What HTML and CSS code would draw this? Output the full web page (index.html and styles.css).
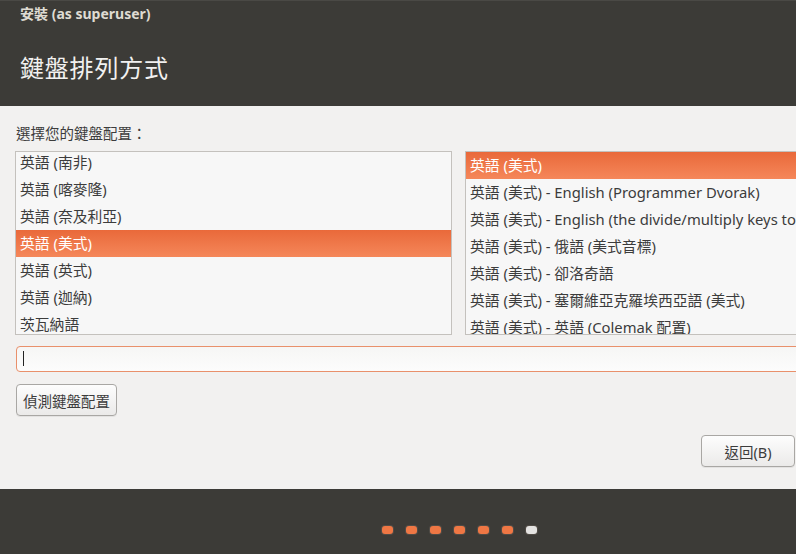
FILE: index.html
```html
<!DOCTYPE html>
<html lang="zh-Hant">
<head>
<meta charset="utf-8">
<link rel="stylesheet" href="styles.css">
</head>
<body>
<div class="window">
  <header class="header">
    <div class="titlebar">安裝 (as superuser)</div>
    <h1 class="page-title">鍵盤排列方式</h1>
  </header>
  <main class="content">
    <div class="label">選擇您的鍵盤配置：</div>
    <div class="lists">
      <div class="list list-left">
        <div class="rows rows-scrolled">
          <div class="row">英語 (南非)</div>
          <div class="row">英語 (喀麥隆)</div>
          <div class="row">英語 (奈及利亞)</div>
          <div class="row selected">英語 (美式)</div>
          <div class="row">英語 (英式)</div>
          <div class="row">英語 (迦納)</div>
          <div class="row">茨瓦納語</div>
        </div>
      </div>
      <div class="list list-right">
        <div class="rows">
          <div class="row selected">英語 (美式)</div>
          <div class="row">英語 (美式) - English (Programmer Dvorak)</div>
          <div class="row">英語 (美式) - English (the divide/multiply keys toggle the layout)</div>
          <div class="row">英語 (美式) - 俄語 (美式音標)</div>
          <div class="row">英語 (美式) - 卻洛奇語</div>
          <div class="row">英語 (美式) - 塞爾維亞克羅埃西亞語 (美式)</div>
          <div class="row">英語 (美式) - 英語 (Colemak 配置)</div>
        </div>
      </div>
    </div>
    <div class="input"><span class="caret"></span></div>
    <div class="actions">
      <button class="btn">偵測鍵盤配置</button>
    </div>
    <div class="nav">
      <button class="btn btn-back">返回(B)</button>
    </div>
  </main>
  <footer class="footer">
    <span class="dot"></span>
    <span class="dot"></span>
    <span class="dot"></span>
    <span class="dot"></span>
    <span class="dot"></span>
    <span class="dot"></span>
    <span class="dot dot-current"></span>
  </footer>
</div>
</body>
</html>
```
FILE: styles.css
```css
* { box-sizing: border-box; }
html, body {
  margin: 0;
  padding: 0;
  width: 796px;
  height: 554px;
  overflow: hidden;
}
body {
  font-family: "Noto Sans", "Noto Sans CJK TC", sans-serif;
  font-size: 14.5px;
  color: #3c3c3c;
  background: #f2f1f0;
}
.window {
  display: flex;
  flex-direction: column;
  height: 554px;
}
.header {
  background: #3c3b37;
  height: 106px;
  padding: 0 0 0 20px;
  border-top: 1px solid #4a4945;
}
.titlebar {
  height: 27px;
  line-height: 26px;
  font-size: 14px;
  font-weight: bold;
  color: #dfdbd2;
}
.page-title {
  margin: 0;
  padding-top: 24px;
  font-size: 24px;
  font-weight: normal;
  line-height: 32px;
  color: #f2f1f0;
  letter-spacing: 0.8px;
}
.content {
  flex: 1;
  overflow: hidden;
  padding: 17px 1px 0 15px;
  display: flex;
  flex-direction: column;
}
.label {
  line-height: 20px;
  padding-left: 1px;
  margin-bottom: 8px;
}
.lists {
  display: flex;
  gap: 13px;
  height: 184px;
}
.list {
  flex: none;
  background: #f7f7f7;
  border: 1px solid #c4c1bd;
  overflow: hidden;
  height: 184px;
}
.list-left { width: 437px; }
.list-right { width: 360px; border-right: none; }
.rows-scrolled { margin-top: -3px; }
.row {
  height: 27px;
  line-height: 27px;
  padding-left: 4px;
  white-space: nowrap;
  color: #3c3c3c;
  font-size: 14.8px;
}
.row.selected {
  background: linear-gradient(#e9693a, #f5875a);
  color: #ffffff;
}
.input {
  margin-top: 11px;
  margin-left: 1px;
  width: 800px;
  height: 26px;
  border: 1px solid #e9906b;
  border-radius: 4px;
  background: linear-gradient(#f6f6f5, #fcfcfc);
  position: relative;
}
.caret {
  position: absolute;
  left: 6px;
  top: 4px;
  width: 1px;
  height: 15px;
  background: #222;
}
.actions {
  margin-top: 12px;
  padding-left: 1px;
  display: flex;
}
.btn {
  font-family: "Noto Sans", "Noto Sans CJK TC", sans-serif;
  font-size: 14.5px;
  color: #3c3c3c;
  height: 32px;
  padding: 0 6px;
  border: 1px solid #a9a7a4;
  border-radius: 4px;
  background: linear-gradient(#fdfdfd, #ebeae9);
  box-shadow: 0 1px 0 rgba(0,0,0,0.06);
}
.nav {
  margin-top: 19px;
  display: flex;
  justify-content: flex-end;
}
.btn-back {
  width: 94px;
}
.footer {
  height: 65px;
  background: #3c3b37;
  display: flex;
  justify-content: center;
  align-items: flex-start;
  gap: 13px;
  padding-top: 37px;
  padding-left: 122px;
}
.dot {
  width: 11px;
  height: 8px;
  border-radius: 3px;
  background: #ef7744;
  box-shadow: 0 0 0 1px rgba(120,110,100,0.35);
}
.dot-current {
  background: #e4e3e1;
}
```
